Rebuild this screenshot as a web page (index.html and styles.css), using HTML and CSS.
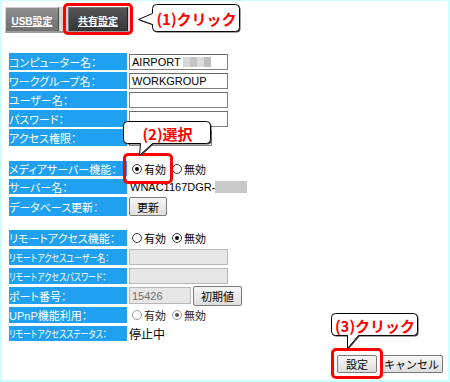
FILE: index.html
```html
<!DOCTYPE html>
<html lang="ja">
<head>
    <meta charset="UTF-8">
    <title>共有設定</title>
    <link rel="stylesheet" href="styles.css">
</head>
<body>
    <div class="page">
        <div class="tabs">
            <a class="tab">USB設定</a>
            <a class="tab tab-on">共有設定</a>
        </div>

        <div class="form">
            <div class="sec sec-top">
                <div class="row"><div class="lbl">コンピューター名：</div><div class="input">AIRPORT<span class="mosaic"><i class="m1"></i><i class="m2"></i><i class="m3"></i><i class="m4"></i></span></div></div>
                <div class="row"><div class="lbl">ワークグループ名：</div><div class="input">WORKGROUP</div></div>
                <div class="row"><div class="lbl">ユーザー名：</div><div class="input"></div></div>
                <div class="row"><div class="lbl">パスワード：</div><div class="input"></div></div>
                <div class="row"><div class="lbl">アクセス権限：</div><div class="input select"></div></div>
            </div>

            <div class="sec">
                <div class="row row-s"><div class="lbl">メディアサーバー機能：</div>
                    <div class="radios">
                        <span class="radio on"></span><span class="rtext">有効</span>
                        <span class="radio"></span><span class="rtext">無効</span>
                    </div>
                </div>
                <div class="row row-s"><div class="lbl">サーバー名：</div><div class="plain">WNAC1167DGR-<span class="blur"></span></div></div>
                <div class="row row-b"><div class="lbl">データベース更新：</div><button class="btn btn-update">更新</button></div>
            </div>

            <div class="sec">
                <div class="row"><div class="lbl">リモートアクセス機能：</div>
                    <div class="radios">
                        <span class="radio"></span><span class="rtext">有効</span>
                        <span class="radio on"></span><span class="rtext">無効</span>
                    </div>
                </div>
                <div class="row"><div class="lbl lbl-long"><span>リモートアクセスユーザー名：</span></div><div class="input off"></div></div>
                <div class="row"><div class="lbl lbl-long"><span>リモートアクセスパスワード：</span></div><div class="input off"></div></div>
                <div class="row row-p"><div class="lbl">ポート番号：</div><div class="input off port">15426</div><button class="btn btn-init">初期値</button></div>
                <div class="row"><div class="lbl">UPnP機能利用：</div>
                    <div class="radios dim">
                        <span class="radio"></span><span class="rtext">有効</span>
                        <span class="radio on"></span><span class="rtext">無効</span>
                    </div>
                </div>
                <div class="row row-last"><div class="lbl lbl-long"><span>リモートアクセスステータス：</span></div><div class="plain jp">停止中</div></div>
            </div>
        </div>

        <div class="actions">
            <button class="btn btn-set">設定</button>
            <button class="btn btn-cancel">キャンセル</button>
        </div>

        <!-- highlight boxes -->
        <div class="mark mark-1"></div>
        <div class="mark mark-2"></div>
        <div class="mark mark-3"></div>

        <!-- callouts -->
        <div class="callout callout-1">
            <svg width="105" height="31" viewBox="0 0 105 31">
                <path d="M19.5,1.5 H98.5 Q102.5,1.5 102.5,5.5 V24.5 Q102.5,28.5 98.5,28.5 H19.5 Q15.5,28.5 15.5,24.5 V21.5 L1.5,16.5 L15.5,10.5 V5.5 Q15.5,1.5 19.5,1.5 Z" transform="translate(1,1)" fill="#444"/>
                <path d="M19.5,1.5 H98.5 Q102.5,1.5 102.5,5.5 V24.5 Q102.5,28.5 98.5,28.5 H19.5 Q15.5,28.5 15.5,24.5 V21.5 L1.5,16.5 L15.5,10.5 V5.5 Q15.5,1.5 19.5,1.5 Z" fill="#fff" stroke="#000"/>
            </svg>
            <span class="ctext">(1)クリック</span>
        </div>
        <div class="callout callout-2">
            <svg width="91" height="38" viewBox="0 0 91 38">
                <path d="M5.5,1.5 H84.5 Q88.5,1.5 88.5,5.5 V19.5 Q88.5,23.5 84.5,23.5 H30.5 L17.5,35.5 L18.5,23.5 H5.5 Q1.5,23.5 1.5,19.5 V5.5 Q1.5,1.5 5.5,1.5 Z" transform="translate(1,1)" fill="#444"/>
                <path d="M5.5,1.5 H84.5 Q88.5,1.5 88.5,5.5 V19.5 Q88.5,23.5 84.5,23.5 H30.5 L17.5,35.5 L18.5,23.5 H5.5 Q1.5,23.5 1.5,19.5 V5.5 Q1.5,1.5 5.5,1.5 Z" fill="#fff" stroke="#000"/>
            </svg>
            <span class="ctext">(2)選択</span>
        </div>
        <div class="callout callout-3">
            <svg width="90" height="38" viewBox="0 0 90 38">
                <path d="M5.5,1.5 H83.5 Q87.5,1.5 87.5,5.5 V19.5 Q87.5,23.5 83.5,23.5 H28.5 L17.5,36.5 L17.5,23.5 H5.5 Q1.5,23.5 1.5,19.5 V5.5 Q1.5,1.5 5.5,1.5 Z" transform="translate(1,1)" fill="#444"/>
                <path d="M5.5,1.5 H83.5 Q87.5,1.5 87.5,5.5 V19.5 Q87.5,23.5 83.5,23.5 H28.5 L17.5,36.5 L17.5,23.5 H5.5 Q1.5,23.5 1.5,19.5 V5.5 Q1.5,1.5 5.5,1.5 Z" fill="#fff" stroke="#000"/>
            </svg>
            <span class="ctext">(3)クリック</span>
        </div>
    </div>
</body>
</html>
```

FILE: styles.css
```css
body { margin: 0; font-family: "Liberation Sans", "Noto Sans CJK JP", sans-serif; color: #000; }
.page { position: relative; width: 450px; height: 382px; box-sizing: border-box; border: 2px solid #ccffff; border-top-width: 1px; background: #fff; overflow: hidden; }

/* tabs */
.tabs { display: inline-flex; gap: 9px; margin: 6px 0 0 3px; padding-right: 3px; background: #d6d6d6; border-bottom: 2px solid #9c9c9c; vertical-align: top; }
.tab { display: flex; align-items: center; justify-content: center; box-sizing: border-box; width: 54px; height: 24px; padding-top: 2px; font-size: 10px; font-weight: bold; color: #fff; text-decoration: underline; background: linear-gradient(#8e8e8e, #707070); border-top: 1px solid #cfcfcf; border-left: 1px solid #cfcfcf; border-right: 1px solid #4a4a4a; }
.tab-on { width: 60px; background: linear-gradient(#555, #363636); border-top-color: #777; border-left-color: #777; border-right-color: #222; }

/* form */
.form { margin-top: 20px; padding-left: 7px; }
.sec { margin-bottom: 14px; }
.sec-top { margin-bottom: 15px; }
.row { display: flex; align-items: center; gap: 2px; height: 16px; margin-bottom: 3px; }
.sec-top .row { height: 17px; margin-bottom: 2px; }
.row-s { height: 15px; }
.row-b { height: 19px; }
.row-p { height: 17px; }
.row-last { height: 15px; margin-bottom: 0; }
.lbl { display: flex; align-items: center; width: 118px; height: 100%; flex: none; background: #1fa0f0; color: #fff; font-size: 11px; font-feature-settings: "palt"; white-space: nowrap; overflow: hidden; }
.lbl-long span { display: inline-block; font-size: 10px; transform: scaleX(0.8); transform-origin: left center; }

.input { display: flex; align-items: center; box-sizing: border-box; width: 99px; height: 16px; padding-left: 2px; border: 1px solid #808080; border-top-color: #6a6a6a; font-size: 11px; background: #fff; }
.select { width: 83px; }
.input.off { background: #e6e6e6; border-color: #b8b8b8; color: #707070; }
.port { width: 62px; height: 17px; }
.mosaic { display: inline-flex; margin-left: 2px; height: 10px; }
.mosaic i { display: block; width: 7px; height: 10px; }
.m1 { background: #d8d8d8; }
.m2 { background: #c4c4c4; }
.m3 { background: #dcdcdc; }
.m4 { background: #bdbdbd; }

.plain { display: flex; align-items: center; font-size: 11px; padding-left: 1px; }
.plain.jp { font-size: 12px; padding-left: 0; }
.blur { display: inline-block; width: 32px; height: 12px; background: #c8c8c8; }

.radios { display: flex; align-items: center; padding-left: 3px; font-size: 11px; }
.radio { display: inline-flex; align-items: center; justify-content: center; box-sizing: border-box; width: 10px; height: 10px; border: 1px solid #3a3a3a; border-radius: 50%; background: #fff; }
.radio.on::after { content: ""; width: 4px; height: 4px; border-radius: 50%; background: #000; }
.rtext { margin: 0 6px 0 2px; }
.dim .radio { border-color: #9a9a9a; }
.dim .radio.on::after { background: #555; }
.dim .rtext { color: #222; }

.btn { box-sizing: border-box; height: 19px; padding: 0; font-family: "Liberation Sans", "Noto Sans CJK JP", sans-serif; font-size: 11px; color: #000; background: linear-gradient(#f6f6f6, #dedede); border: 1px solid #7a7a7a; border-radius: 2px; }
.btn-update { width: 38px; }
.btn-init { width: 49px; height: 20px; margin-left: 0; }
.actions { display: flex; justify-content: flex-end; gap: 3px; padding-right: 5px; margin-top: 0; }
.btn-set { width: 40px; height: 18px; }
.btn-cancel { width: 63px; height: 18px; }

/* overlays */
.mark { position: absolute; box-sizing: border-box; border: 3px solid #f00; border-radius: 5px; }
.mark-1 { left: 61px; top: 2px; width: 70px; height: 32px; }
.mark-2 { left: 121px; top: 152px; width: 50px; height: 31px; }
.mark-3 { left: 329px; top: 347px; width: 52px; height: 31px; }

.callout { position: absolute; }
.callout svg { display: block; }
.ctext { position: absolute; display: flex; align-items: center; justify-content: center; color: #f00; font-family: "Noto Sans CJK JP", sans-serif; font-weight: bold; font-size: 15px; line-height: 1; }
.callout-1 { left: 135px; top: 2px; }
.callout-1 .ctext { left: 16px; top: 2px; width: 87px; height: 27px; }
.callout-2 { left: 120px; top: 119px; }
.callout-2 .ctext { left: 2px; top: 2px; width: 87px; height: 22px; }
.callout-3 { left: 328px; top: 311px; }
.callout-3 .ctext { left: 2px; top: 2px; width: 86px; height: 22px; }
```
